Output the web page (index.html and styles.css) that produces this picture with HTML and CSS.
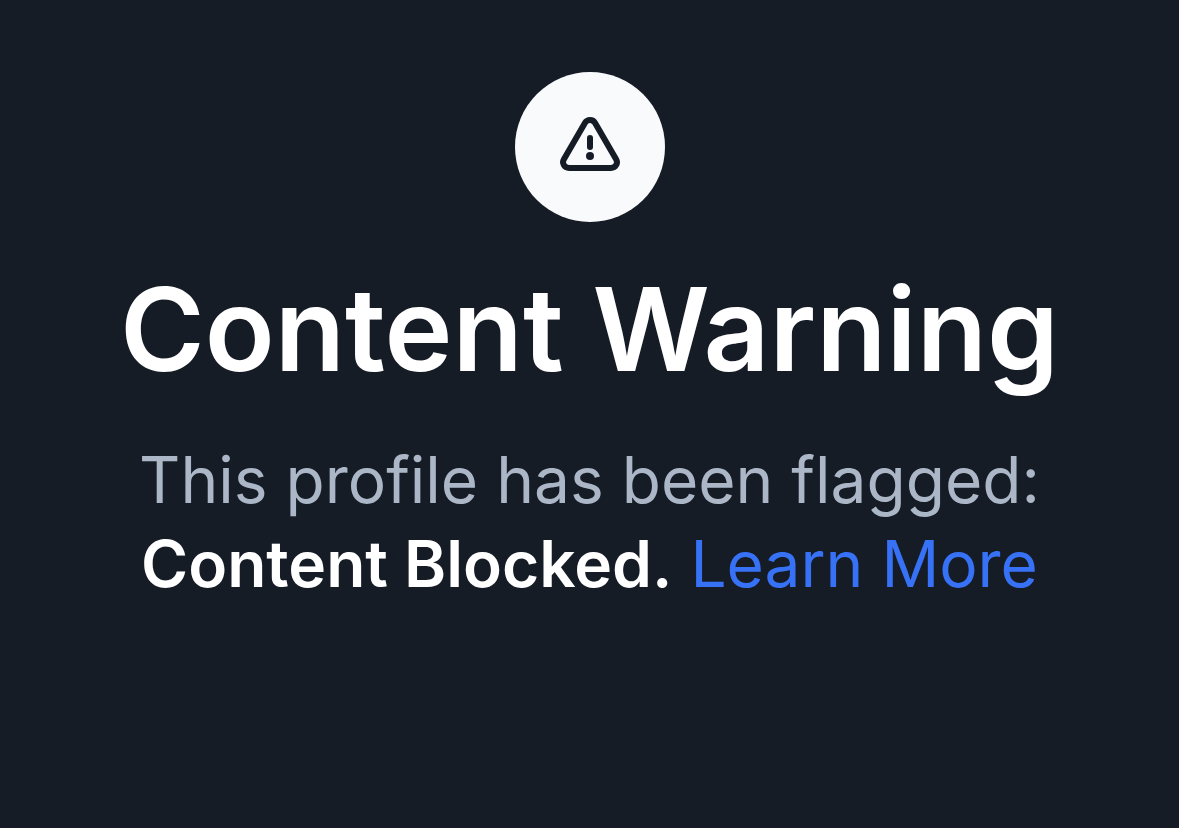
FILE: index.html
```html
<!DOCTYPE html>
<html lang="en">
<head>
<meta charset="utf-8">
<meta name="viewport" content="width=device-width, initial-scale=1">
<title>Content Warning</title>
<link rel="stylesheet" href="styles.css">
</head>
<body>
<main class="warning">
  <div class="badge">
    <svg class="badge-icon" viewBox="0 0 60 54" fill="none" aria-hidden="true">
      <path d="M24.900 6 L3.900 42.200 C1.600 46.200 4.400 51 9 51 H51 C55.600 51 58.400 46.200 56.100 42.200 L35.100 6 C32.800 2 27.200 2 24.900 6 Z" stroke="currentColor" stroke-width="6" stroke-linejoin="round"/>
      <path d="M30 21 V30" stroke="currentColor" stroke-width="6" stroke-linecap="round"/>
      <circle cx="30" cy="39" r="4" fill="currentColor"/>
    </svg>
  </div>
  <h1 class="title">Content Warning</h1>
  <p class="message">This profile has been flagged:<br><strong class="reason">Content Blocked.</strong> <a class="link" href="#">Learn More</a></p>
</main>
</body>
</html>
```
FILE: styles.css
```css
body {
  margin: 0;
  background: #161c26;
  font-family: Inter, "Liberation Sans", sans-serif;
}

.warning {
  display: flex;
  flex-direction: column;
  align-items: center;
  padding: 72px 24px;
  text-align: center;
}

.badge {
  display: grid;
  place-items: center;
  width: 150px;
  height: 150px;
  border-radius: 50%;
  background: #f9fafc;
  color: #161c26;
}

.badge-icon {
  width: 60px;
  height: 54px;
  margin-bottom: 6px;
}

.title {
  margin: 36px 0 0;
  color: #fff;
  font-size: 115px;
  font-weight: 600;
  line-height: 144px;
}

.message {
  margin: 36px 0 0;
  color: #abb6c6;
  font-size: 64px;
  line-height: 84px;
}

.reason {
  color: #fff;
  font-weight: 600;
}

.link {
  color: #3772f6;
  text-decoration: none;
}
```
